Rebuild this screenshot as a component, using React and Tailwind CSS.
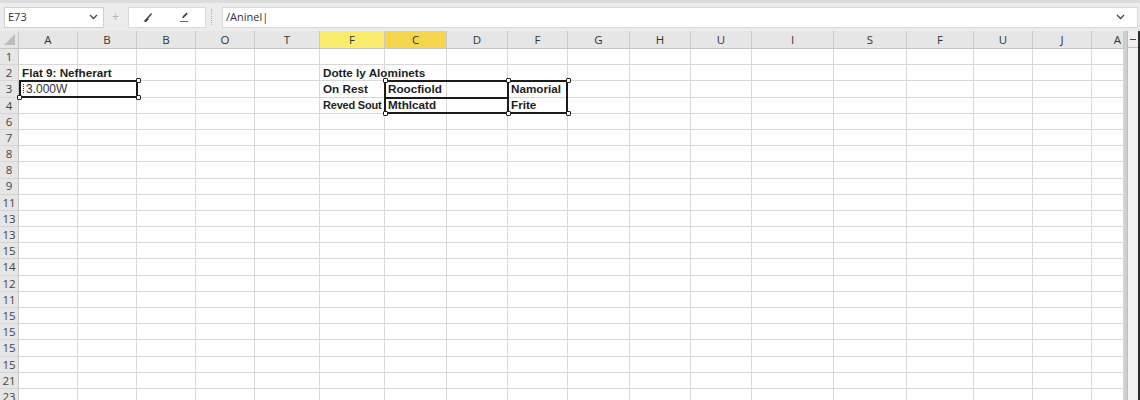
import React from "react";

const cols = [
  { l: "A", w: 59 },
  { l: "B", w: 59 },
  { l: "B", w: 59 },
  { l: "O", w: 59 },
  { l: "T", w: 65 },
  { l: "F", w: 65, hl: "bg-[#f7ec6c]" },
  { l: "C", w: 62, hl: "bg-[#f4d54c]" },
  { l: "D", w: 61 },
  { l: "F", w: 60 },
  { l: "G", w: 62 },
  { l: "H", w: 61 },
  { l: "U", w: 61 },
  { l: "I", w: 82 },
  { l: "S", w: 73 },
  { l: "F", w: 67 },
  { l: "U", w: 59 },
  { l: "J", w: 59 },
  { l: "A", w: 32, right: true },
];

const rows = ["1","2","3","4","6","7","8","8","9","11","13","13","15","14","12","11","15","15","15","15","21","23"];

const cellText = {
  "1-0": { t: "Flat 9: Nefherart" },
  "1-5": { t: "Dotte ly Alominets" },
  "2-5": { t: "On Rest" },
  "2-6": { t: "Roocfiold" },
  "2-8": { t: "Namorial" },
  "3-5": { t: "Reved Sout", narrow: true },
  "3-6": { t: "Mthlcatd" },
  "3-8": { t: "Frite" },
};

const colLeft = (i) => 19 + cols.slice(0, i).reduce((a, c) => a + c.w, 0);
const RH = 16.2;

function Handle({ x, y }) {
  return (
    <div
      className="absolute z-30 w-[5px] h-[5px] bg-white border border-[#222] rounded-[1px]"
      style={{ left: x - 2.5, top: y - 2.5 }}
    />
  );
}

export default function App() {
  return (
    <div className="w-[1140px] h-[400px] overflow-hidden bg-white text-[#222]" style={{ fontFamily: '"Liberation Sans", Arial, sans-serif' }}>
      {/* toolbar */}
      <div className="h-[31px] bg-[#ececec] border-t-[3px] border-[#dcdcdc] flex items-center">
        <div className="ml-[4px] w-[100px] h-[21px] bg-white border border-[#d0d0d0] flex items-center justify-between pl-[3px] pr-[5px]">
          <span className="text-[11px] text-[#333]" style={{ fontFamily: '"Open Sans", sans-serif' }}>E73</span>
          <svg width="9" height="6" viewBox="0 0 9 6"><path d="M1 1 L4.5 4.5 L8 1" fill="none" stroke="#444" strokeWidth="1.3" /></svg>
        </div>
        <span className="ml-[8px] w-[10px] text-[12px] text-[#b5b5b5]">+</span>
        <div className="ml-[6px] w-[78px] h-[21px] bg-white border border-[#dadada] flex items-center">
          <svg className="ml-[13px]" width="11" height="11" viewBox="0 0 11 11">
            <path d="M1.5 9.5 L4.5 6 L7 7.2 L4 10 Z" fill="#444" />
            <path d="M5.5 6.2 L9.2 2" stroke="#444" strokeWidth="1.5" strokeLinecap="round" />
          </svg>
          <svg className="ml-[25px]" width="12" height="12" viewBox="0 0 12 12">
            <path d="M4 7.5 L5 5 L8.5 1.5 L9.8 2.8 L6.3 6.3 Z" fill="#444" />
            <path d="M2 10.5 L10 10.5" stroke="#666" strokeWidth="1" />
          </svg>
        </div>
        <div className="ml-[5px] w-[1px] h-[16px] border-l border-dotted border-[#b0b0b0]" />
        <div className="ml-[10px] w-[916px] h-[21px] bg-white border border-[#d8d8d8] flex items-center justify-between pl-[3px] pr-[12px]">
          <span className="text-[11px] text-[#333]" style={{ fontFamily: '"Open Sans", sans-serif' }}>/Aninel|</span>
          <svg width="9" height="6" viewBox="0 0 9 6"><path d="M1 1 L4.5 4.5 L8 1" fill="none" stroke="#444" strokeWidth="1.3" /></svg>
        </div>
      </div>

      <div className="flex">
        <div className="relative w-[1124px]">
          {/* header row */}
          <div className="flex h-[18px] bg-[#e6e6e6] border-b border-[#c4c4c4]">
            <div className="w-[19px] h-full border-r border-[#c8c8c8] flex items-end justify-end pr-[3px] pb-[3px]">
              <svg width="11" height="11" viewBox="0 0 11 11"><path d="M11 0 L11 11 L0 11 Z" fill="#bdbdbd" /></svg>
            </div>
            {cols.map((c, i) => (
              <div
                key={i}
                className={`h-full border-r border-[#cacaca] flex items-center text-[11.5px] text-[#333] ${c.hl || ""} ${c.right ? "justify-end pr-[2px]" : "justify-center"}`}
                style={{ width: c.w, fontFamily: '"Open Sans", sans-serif' }}
              >
                {c.l}
              </div>
            ))}
          </div>
          {/* rows */}
          {rows.map((r, ri) => (
            <div key={ri} className="flex" style={{ height: RH }}>
              <div className="w-[19px] h-full bg-[#e6e6e6] border-r border-[#c4c4c4] border-b border-b-[#d6d6d6] flex items-center justify-center text-[11.5px] text-[#444]" style={{ fontFamily: '"Open Sans", sans-serif' }}>
                {r}
              </div>
              {cols.map((c, ci) => {
                const ct = cellText[`${ri}-${ci}`];
                return (
                  <div
                    key={ci}
                    className="h-full border-r border-b border-[#d8d8d8] flex items-center pl-[3px] whitespace-nowrap overflow-visible"
                    style={{ width: c.w }}
                  >
                    {ct && (
                      <span className={`relative z-10 leading-none font-bold text-[#1e1e1e] ${ct.narrow ? "text-[11px] tracking-[-0.2px]" : "text-[11.7px]"}`}>{ct.t}</span>
                    )}
                  </div>
                );
              })}
            </div>
          ))}

          {/* selection A3 */}
          <div
            className="absolute border-2 border-[#1b1b1b] flex items-center pl-[2px] z-20"
            style={{ left: 19, top: 18 + 2 * RH - 1, width: 119, height: RH + 1 }}
          >
            <span className="inline-block w-[2px] h-[9px] border-l border-dotted border-[#333] mr-[1px]" />
            <span className="text-[12px] leading-none text-[#333]">3.000W</span>
          </div>
          <Handle x={138} y={18 + 2 * RH - 1} />
          <Handle x={19} y={18 + 3 * RH} />
          <Handle x={138} y={18 + 3 * RH} />

          {/* box C3:F4 */}
          <div
            className="absolute border-2 border-[#1b1b1b] z-20"
            style={{ left: colLeft(6) - 1, top: 18 + 2 * RH - 1, width: colLeft(9) - colLeft(6) + 1, height: 2 * RH + 1 }}
          />
          <div className="absolute bg-[#1b1b1b] z-20 h-[2px]" style={{ left: colLeft(6), top: 18 + 3 * RH - 1, width: colLeft(8) - colLeft(6) }} />
          <div className="absolute bg-[#1b1b1b] z-20 w-[2px]" style={{ left: colLeft(8) - 1, top: 18 + 2 * RH - 1, height: 2 * RH + 1 }} />
          <Handle x={colLeft(6)} y={18 + 2 * RH - 1} />
          <Handle x={colLeft(8)} y={18 + 2 * RH - 1} />
          <Handle x={colLeft(9)} y={18 + 2 * RH - 1} />
          <Handle x={colLeft(6)} y={18 + 4 * RH} />
          <Handle x={colLeft(8)} y={18 + 4 * RH} />
          <Handle x={colLeft(9)} y={18 + 4 * RH} />
        </div>

        {/* scrollbar */}
        <div className="w-[16px] h-[369px] bg-[#cfcfcf] pl-[3px] flex flex-col">
          <div className="flex-1 bg-[#f3f3f3] border-l border-[#bdbdbd] border-r-[2px] border-r-[#2a2a2a] flex flex-col">
            <div className="h-[17px] border-b border-[#c4c4c4] bg-[#f0f0f0] flex items-center justify-center">
              <div className="w-[6px] h-[1px] bg-[#444]" />
            </div>
          </div>
        </div>
      </div>
    </div>
  );
}
